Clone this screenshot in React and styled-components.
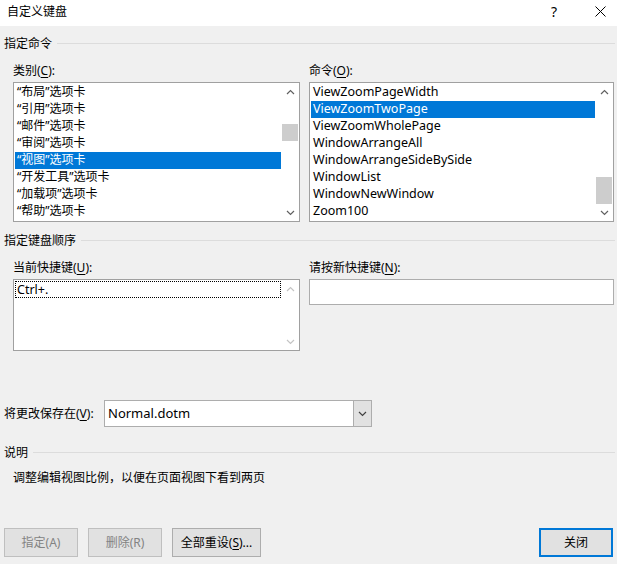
import styled, { createGlobalStyle } from "styled-components";

const GlobalStyle = createGlobalStyle`
  html, body {
    margin: 0;
    padding: 0;
    background: #f0f0f0;
  }
  body {
    font-family: "Noto Sans", "Noto Sans CJK SC", sans-serif;
    font-size: 12px;
    color: #000;
  }
  u {
    text-underline-offset: 2px;
  }
`;

const UI_FONT = `"Noto Sans", "Noto Sans CJK SC", sans-serif`;

const categories = [
  "“布局”选项卡",
  "“引用”选项卡",
  "“邮件”选项卡",
  "“审阅”选项卡",
  "“视图”选项卡",
  "“开发工具”选项卡",
  "“加载项”选项卡",
  "“帮助”选项卡",
];

const commands = [
  "ViewZoomPageWidth",
  "ViewZoomTwoPage",
  "ViewZoomWholePage",
  "WindowArrangeAll",
  "WindowArrangeSideBySide",
  "WindowList",
  "WindowNewWindow",
  "Zoom100",
];

function Chevron({ up, color }) {
  return (
    <svg width="9" height="6" viewBox="0 0 9 6">
      <polyline
        points={up ? "1,5 4.5,1.5 8,5" : "1,1 4.5,4.5 8,1"}
        fill="none"
        stroke={color}
        strokeWidth="1.2"
      />
    </svg>
  );
}

function ScrollBar({ thumbTop, thumbHeight, disabled }) {
  const color = disabled ? "#c4c4c4" : "#606060";
  return (
    <Scroll>
      <Arrow>
        <Chevron up color={color} />
      </Arrow>
      <Track>
        {thumbHeight ? (
          <Thumb style={{ marginTop: thumbTop, height: thumbHeight }} />
        ) : null}
      </Track>
      <Arrow>
        <Chevron color={color} />
      </Arrow>
    </Scroll>
  );
}

function ListBox({ items, selected, thumbTop, thumbHeight, latin }) {
  return (
    <Box $height={140}>
      <Rows>
        {items.map((item, i) => (
          <Row key={item} $selected={i === selected} $latin={latin}>
            {item}
          </Row>
        ))}
      </Rows>
      <ScrollBar thumbTop={thumbTop} thumbHeight={thumbHeight} />
    </Box>
  );
}

export default function App() {
  return (
    <Window>
      <GlobalStyle />
      <TitleBar>
        <Title>自定义键盘</Title>
        <TitleButtons>
          <Help>?</Help>
          <svg width="11" height="11" viewBox="0 0 11 11">
            <path d="M0.5 0.5 L10.5 10.5 M10.5 0.5 L0.5 10.5" stroke="#000" strokeWidth="1" />
          </svg>
        </TitleButtons>
      </TitleBar>

      <Body>
        <GroupHeader $top={9}>指定命令</GroupHeader>
        <Columns $top={10}>
          <Field>
            <Label>类别(<u>C</u>):</Label>
            <ListBox items={categories} selected={4} thumbTop={24} thumbHeight={17} />
          </Field>
          <Field>
            <Label>命令(<u>O</u>):</Label>
            <ListBox items={commands} selected={1} thumbTop={77} thumbHeight={27} latin />
          </Field>
        </Columns>

        <GroupHeader $top={10}>指定键盘顺序</GroupHeader>
        <Columns $top={10}>
          <Field>
            <Label>当前快捷键(<u>U</u>):</Label>
            <Box $height={72}>
              <Rows>
                <Row $focused $latin>Ctrl+.</Row>
              </Rows>
              <ScrollBar disabled />
            </Box>
          </Field>
          <Field>
            <Label>请按新快捷键(<u>N</u>):</Label>
            <TextInput />
          </Field>
        </Columns>

        <SaveRow>
          <SaveLabel>将更改保存在(<u>V</u>):</SaveLabel>
          <Combo>
            <ComboText>Normal.dotm</ComboText>
            <ComboButton>
              <Chevron color="#404040" />
            </ComboButton>
          </Combo>
        </SaveRow>

        <GroupHeader $top={17}>说明</GroupHeader>
        <Description>调整编辑视图比例，以便在页面视图下看到两页</Description>

        <Footer>
          <ButtonGroup>
            <Button $width={74} disabled>指定(A)</Button>
            <Button $width={74} disabled>删除(R)</Button>
            <Button $width={89}>全部重设(<u>S</u>)...</Button>
          </ButtonGroup>
          <Button $width={74} $default>关闭</Button>
        </Footer>
      </Body>
    </Window>
  );
}

const Window = styled.div`
  width: 617px;
  height: 564px;
  background: #f0f0f0;
  display: flex;
  flex-direction: column;
  overflow: hidden;
`;

const TitleBar = styled.div`
  height: 26px;
  background: #fff;
  display: flex;
  align-items: center;
  justify-content: space-between;
  padding: 0 11px 0 7px;
`;

const Title = styled.div`
  font-family: ${UI_FONT};
  font-size: 12px;
  line-height: 16px;
  margin-top: -2px;
`;

const TitleButtons = styled.div`
  display: flex;
  align-items: center;
  gap: 38px;
  margin-top: -3px;
`;

const Help = styled.span`
  font-family: "Noto Sans", sans-serif;
  font-size: 14px;
  line-height: 16px;
`;

const Body = styled.div`
  display: flex;
  flex-direction: column;
  padding: 0 2px 0 4px;
`;

const GroupHeader = styled.div`
  margin-top: ${(p) => p.$top}px;
  display: flex;
  align-items: center;
  gap: 5px;
  height: 17px;
  font-family: ${UI_FONT};
  font-size: 12px;
  line-height: 17px;
  &::after {
    content: "";
    flex: 1;
    height: 1px;
    background: #dcdcdc;
  }
`;

const Columns = styled.div`
  margin-top: ${(p) => p.$top}px;
  margin-left: 9px;
  display: grid;
  grid-template-columns: 287px 305px;
  column-gap: 9px;
  align-items: start;
`;

const Field = styled.div`
  display: flex;
  flex-direction: column;
  gap: 3px;
`;

const Label = styled.div`
  font-family: ${UI_FONT};
  font-size: 12px;
  line-height: 17px;
  height: 17px;
`;

const Box = styled.div`
  box-sizing: border-box;
  height: ${(p) => p.$height}px;
  border: 1px solid #a0a0a0;
  background: #fff;
  display: flex;
`;

const Rows = styled.div`
  flex: 1;
  padding: 1px;
  display: flex;
  flex-direction: column;
  overflow: hidden;
`;

const Row = styled.div`
  box-sizing: border-box;
  height: 17px;
  line-height: 16px;
  white-space: nowrap;
  font-family: ${(p) => (p.$latin ? `"Noto Sans", sans-serif` : UI_FONT)};
  font-size: ${(p) => (p.$latin ? "12.5px" : "12px")};
  background: ${(p) => (p.$selected ? "#0078d7" : "transparent")};
  color: ${(p) => (p.$selected ? "#fff" : "#000")};
  border: ${(p) => (p.$focused ? "1px dotted #000" : "none")};
  padding-left: ${(p) => (p.$focused ? "1px" : "2px")};
`;

const Scroll = styled.div`
  width: 17px;
  display: flex;
  flex-direction: column;
  background: #fff;
`;

const Arrow = styled.div`
  height: 17px;
  display: flex;
  align-items: center;
  justify-content: center;
`;

const Track = styled.div`
  flex: 1;
  display: flex;
  flex-direction: column;
`;

const Thumb = styled.div`
  width: 16px;
  background: #cdcdcd;
`;

const TextInput = styled.div`
  box-sizing: border-box;
  height: 26px;
  border: 1px solid #adadad;
  background: #fff;
`;

const SaveRow = styled.div`
  margin-top: 49px;
  display: flex;
  align-items: center;
`;

const SaveLabel = styled.div`
  width: 100px;
  font-family: ${UI_FONT};
  font-size: 12px;
  line-height: 17px;
`;

const Combo = styled.div`
  box-sizing: border-box;
  width: 268px;
  height: 27px;
  border: 1px solid #adadad;
  background: #fff;
  display: flex;
`;

const ComboText = styled.div`
  flex: 1;
  padding-left: 3px;
  font-family: "Noto Sans", sans-serif;
  font-size: 13px;
  line-height: 24px;
`;

const ComboButton = styled.div`
  width: 17px;
  background: #e1e1e1;
  border-left: 1px solid #adadad;
  display: flex;
  align-items: center;
  justify-content: center;
`;

const Description = styled.div`
  margin-top: 8px;
  padding-left: 9px;
  font-family: ${UI_FONT};
  font-size: 12px;
  line-height: 17px;
`;

const Footer = styled.div`
  margin-top: 42px;
  display: flex;
  justify-content: space-between;
  padding-right: 2px;
`;

const ButtonGroup = styled.div`
  display: flex;
  gap: 10px;
`;

const Button = styled.button`
  box-sizing: border-box;
  width: ${(p) => p.$width}px;
  height: 29px;
  padding: 0;
  margin: 0;
  background: #e1e1e1;
  border: ${(p) =>
    p.$default ? "2px solid #0078d7" : p.disabled ? "1px solid #bfbfbf" : "1px solid #adadad"};
  color: ${(p) => (p.disabled ? "#838383" : "#000")};
  font-family: ${UI_FONT};
  font-size: 12px;
  line-height: 17px;
  cursor: default;
`;
